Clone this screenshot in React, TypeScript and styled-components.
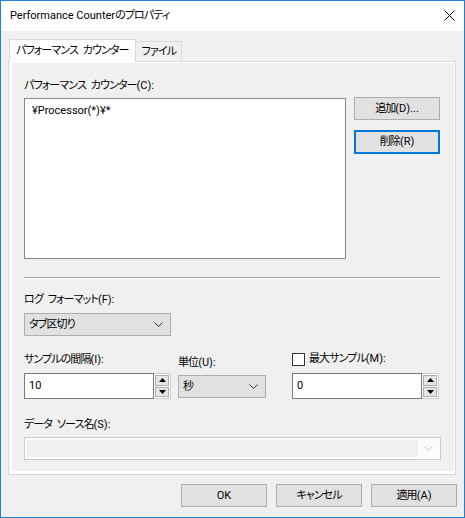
import styled, { createGlobalStyle } from "styled-components";

const GlobalStyle = createGlobalStyle`
  html, body {
    margin: 0;
    padding: 0;
    background: #ffffff;
  }
  body {
    font-family: Roboto, "Noto Sans CJK JP", sans-serif;
    font-size: 11px;
    color: #000000;
    font-feature-settings: "palt" 1;
  }
  * {
    box-sizing: border-box;
  }
`;

// Japanese runs: the UI font sets kana tighter than Noto Sans CJK does
const Ja = styled.span`
  letter-spacing: -0.9px;
  word-spacing: 3px;
`;

const Window = styled.div`
  width: 465px;
  height: 518px;
  border: 1px solid #1883d7;
  display: flex;
  flex-direction: column;
  background: #f0f0f0;
`;

const TitleBar = styled.div`
  height: 30px;
  background: #ffffff;
  display: flex;
  align-items: center;
  justify-content: space-between;
  padding: 0 9px 0 9px;
`;

const Title = styled.span`
  line-height: 16px;
`;

const CloseIcon = styled.svg`
  width: 11px;
  height: 11px;
  margin-top: -1px;
`;

const Body = styled.div`
  flex: 1;
  display: flex;
  flex-direction: column;
  padding: 8px 8px 0 7px;
`;

const TabStrip = styled.div`
  display: flex;
  align-items: flex-end;
  padding-left: 1px;
  height: 22px;
  position: relative;
  z-index: 1;
`;

const Tab = styled.div<{ $active?: boolean }>`
  height: ${(p) => (p.$active ? "23px" : "20px")};
  margin-bottom: ${(p) => (p.$active ? "-1px" : "0")};
  margin-left: ${(p) => (p.$active ? "0" : "-1px")};
  padding: ${(p) => (p.$active ? "0 6px 0 6px" : "1px 5px 0 6px")};
  background: ${(p) => (p.$active ? "#ffffff" : "#f0f0f0")};
  border: 1px solid #d9d9d9;
  border-bottom: none;
  display: flex;
  align-items: center;
  line-height: 16px;
  white-space: pre;
  position: relative;
  z-index: ${(p) => (p.$active ? 2 : 1)};
`;

const Panel = styled.div`
  height: 414px;
  border: 1px solid #d9d9d9;
  background: #ffffff;
  padding: 1px 1px 3px 3px;
  display: flex;
`;

const Page = styled.div`
  flex: 1;
  background: #f0f0f0;
  padding: 15px 0 0 12px;
  display: flex;
  flex-direction: column;
`;

const Label = styled.div`
  line-height: 16px;
  height: 16px;
  white-space: pre;
`;

const CounterRow = styled.div`
  display: flex;
  align-items: flex-start;
  margin-top: 4px;
`;

const ListBox = styled.div`
  width: 322px;
  height: 161px;
  background: #ffffff;
  border: 1px solid #828790;
  padding: 4px 7px;
  line-height: 16px;
`;

const SideButtons = styled.div`
  display: flex;
  flex-direction: column;
  gap: 10px;
  margin: -1px 0 0 8px;
`;

const Button = styled.button<{ $focused?: boolean }>`
  width: 86px;
  height: ${(p) => (p.$focused ? 24 : 23)}px;
  background: #e1e1e1;
  border: ${(p) => (p.$focused ? "2px solid #0078d7" : "1px solid #adadad")};
  font: inherit;
  color: #000000;
  padding: 0;
  line-height: 16px;
  display: flex;
  align-items: center;
  justify-content: center;
`;

const Separator = styled.div`
  width: 416px;
  height: 2px;
  border-top: 1px solid #a0a0a0;
  border-bottom: 1px solid #ffffff;
  margin: 18px 0 13px;
`;

const Combo = styled.div<{ $width: number }>`
  width: ${(p) => p.$width}px;
  height: 23px;
  background: #e1e1e1;
  border: 1px solid #adadad;
  display: flex;
  align-items: center;
  justify-content: space-between;
  padding: 0 7px 0 4px;
  line-height: 16px;
`;

const Chevron = styled.svg`
  width: 9px;
  height: 5px;
`;

const FieldRow = styled.div`
  display: flex;
  align-items: flex-start;
  margin-top: 16px;
`;

const Field = styled.div<{ $offset?: number; $left?: number; $gap: number }>`
  display: flex;
  flex-direction: column;
  gap: ${(p) => p.$gap}px;
  margin-top: ${(p) => p.$offset ?? 0}px;
  margin-left: ${(p) => p.$left ?? 0}px;
`;

const SpinBox = styled.div`
  display: flex;
  width: 147px;
  height: 26px;
`;

const SpinEdit = styled.div`
  flex: 1;
  background: #ffffff;
  border: 1px solid #7a7a7a;
  padding: 0 4px;
  display: flex;
  align-items: center;
  line-height: 16px;
`;

const SpinButtons = styled.div`
  width: 17px;
  border: 1px solid #cccccc;
  border-left: none;
  background: #ffffff;
  display: flex;
  flex-direction: column;
  padding: 1px;
  gap: 1px;
`;

const SpinButton = styled.div`
  flex: 1;
  background: #e5e5e5;
  border: 1px solid #adadad;
  display: flex;
  align-items: center;
  justify-content: center;
`;

const Arrow = styled.svg`
  width: 7px;
  height: 4px;
`;

const CheckRow = styled.label`
  display: flex;
  align-items: center;
  gap: 4px;
  height: 16px;
  line-height: 16px;
`;

const CheckBox = styled.span`
  width: 13px;
  height: 13px;
  border: 1px solid #333333;
  background: #ffffff;
`;

const DisabledCombo = styled.div`
  width: 417px;
  height: 23px;
  margin-top: 4px;
  border: 1px solid #cccccc;
  background: #fcfcfc;
  display: flex;
  align-items: center;
  padding: 2px;
`;

const DisabledEdit = styled.div`
  flex: 1;
  height: 100%;
  background: #f0f0f0;
`;

const DisabledArrow = styled.div`
  width: 20px;
  display: flex;
  justify-content: center;
`;

const Footer = styled.div`
  display: flex;
  justify-content: flex-end;
  gap: 9px;
  padding-top: 9px;
  margin-right: -1px;
`;

const ChevronDown = ({ color = "#333333" }: { color?: string }) => (
  <Chevron viewBox="0 0 9 5">
    <polyline points="0.5,0.5 4.5,4.5 8.5,0.5" fill="none" stroke={color} strokeWidth="1" />
  </Chevron>
);

const Spin = ({ value }: { value: string }) => (
  <SpinBox>
    <SpinEdit>{value}</SpinEdit>
    <SpinButtons>
      <SpinButton>
        <Arrow viewBox="0 0 7 4">
          <polygon points="3.5,0 7,4 0,4" fill="#000000" />
        </Arrow>
      </SpinButton>
      <SpinButton>
        <Arrow viewBox="0 0 7 4">
          <polygon points="0,0 7,0 3.5,4" fill="#000000" />
        </Arrow>
      </SpinButton>
    </SpinButtons>
  </SpinBox>
);

const App = () => {
  return (
    <>
      <GlobalStyle />
      <Window>
        <TitleBar>
          <Title>
            Performance Counter<Ja>のプロパティ</Ja>
          </Title>
          <CloseIcon viewBox="0 0 11 11">
            <line x1="0.5" y1="0.5" x2="10.5" y2="10.5" stroke="#000000" strokeWidth="1" />
            <line x1="10.5" y1="0.5" x2="0.5" y2="10.5" stroke="#000000" strokeWidth="1" />
          </CloseIcon>
        </TitleBar>
        <Body>
          <TabStrip>
            <Tab $active>
              <Ja>パフォーマンス カウンター</Ja>
            </Tab>
            <Tab>
              <Ja>ファイル</Ja>
            </Tab>
          </TabStrip>
          <Panel>
            <Page>
              <Label>
                <Ja>パフォーマンス カウンター</Ja>(C):
              </Label>
              <CounterRow>
                <ListBox>¥Processor(*)¥*</ListBox>
                <SideButtons>
                  <Button>
                    <Ja>追加</Ja>(D)...
                  </Button>
                  <Button $focused>
                    <Ja>削除</Ja>(R)
                  </Button>
                </SideButtons>
              </CounterRow>
              <Separator />
              <Label>
                <Ja>ログ フォーマット</Ja>(F):
              </Label>
              <Field $gap={5} $offset={5}>
                <Combo $width={147}>
                  <Ja>タブ区切り</Ja>
                  <ChevronDown />
                </Combo>
              </Field>
              <FieldRow>
                <Field $gap={5}>
                  <Label>
                    <Ja>サンプルの間隔</Ja>(I):
                  </Label>
                  <Spin value="10" />
                </Field>
                <Field $gap={4} $offset={3} $left={7}>
                  <Label>
                    <Ja>単位</Ja>(U):
                  </Label>
                  <Combo $width={88}>
                    <Ja>秒</Ja>
                    <ChevronDown />
                  </Combo>
                </Field>
                <Field $gap={6} $offset={-1} $left={26}>
                  <CheckRow>
                    <CheckBox />
                    <span>
                      <Ja>最大サンプル</Ja>(M):
                    </span>
                  </CheckRow>
                  <Spin value="0" />
                </Field>
              </FieldRow>
              <Field $gap={0} $offset={18}>
                <Label>
                  <Ja>データ ソース名</Ja>(S):
                </Label>
                <DisabledCombo>
                  <DisabledEdit />
                  <DisabledArrow>
                    <ChevronDown color="#bfbfbf" />
                  </DisabledArrow>
                </DisabledCombo>
              </Field>
            </Page>
          </Panel>
          <Footer>
            <Button>OK</Button>
            <Button>
              <Ja>キャンセル</Ja>
            </Button>
            <Button>
              <Ja>適用</Ja>(A)
            </Button>
          </Footer>
        </Body>
      </Window>
    </>
  );
};

export default App;
